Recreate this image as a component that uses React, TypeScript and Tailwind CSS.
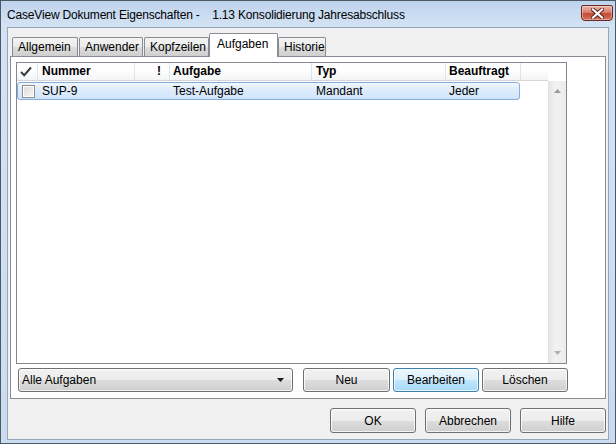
import React from "react";
import clsx from "clsx";

const btnNormal =
  "border-[#707070] bg-[linear-gradient(to_bottom,#f2f2f2_0%,#ebebeb_50%,#dddddd_51%,#cfcfcf_100%)]";
const btnFocus =
  "border-[#3c7fb1] bg-[linear-gradient(to_bottom,#eaf6fd_0%,#d9f0fc_50%,#bee6fd_51%,#a7d9f5_100%)]";

function Button({ label, focused, className }: { label: string; focused?: boolean; className?: string }) {
  return (
    <div
      className={clsx(
        "h-[24px] rounded-[3px] border flex items-center justify-center text-[12px] text-black shadow-[inset_0_0_0_1px_rgba(255,255,255,0.75)]",
        focused ? btnFocus : btnNormal,
        className
      )}
    >
      {label}
    </div>
  );
}

function Tab({ label, selected, className }: { label: string; selected?: boolean; className?: string }) {
  if (selected) {
    return (
      <div
        className={clsx(
          "relative z-10 -mb-px h-[24px] border border-b-0 border-[#898c95] rounded-t-[2px] bg-white pl-[7px] pt-[3px] text-[12px] leading-[15px]",
          className
        )}
      >
        {label}
      </div>
    );
  }
  return (
    <div
      className={clsx(
        "h-[19px] border border-b-0 border-[#898c95] rounded-t-[2px] bg-[linear-gradient(to_bottom,#f3f3f3_0%,#ebebeb_50%,#dddddd_51%,#cfcfcf_100%)] pl-[5px] pt-[2px] text-[12px] leading-[15px]",
        className
      )}
    >
      {label}
    </div>
  );
}

function Triangle({ up, color }: { up?: boolean; color: string }) {
  return (
    <svg width="7" height="4" viewBox="0 0 7 4">
      <path d={up ? "M0 4 L3.5 0 L7 4 Z" : "M0 0 L7 0 L3.5 4 Z"} fill={color} />
    </svg>
  );
}

export default function App() {
  return (
    <div className="w-[616px] h-[444px] bg-[linear-gradient(to_bottom,#bdd3ec_0px,#d4e3f4_26px,#cbdcf0_100%)] border border-[#4f5966] flex flex-col font-['Liberation_Sans',Arial,sans-serif] text-black select-none">
      {/* title bar */}
      <div className="h-[26px] flex items-start">
        <span className="ml-[6px] mt-[7px] text-[12px] leading-[15px] tracking-[-0.18px] whitespace-pre">
          {"CaseView Dokument Eigenschaften -    1.13 Konsolidierung Jahresabschluss"}
        </span>
        <div className="flex-1" />
        <div className="mt-[4px] mr-[2px] w-[32px] h-[16px] rounded-b-[4px] rounded-t-[2px] border border-[#6b2a24] bg-[linear-gradient(to_bottom,#eab3a5_0%,#d98170_45%,#c64a36_55%,#d5735d_100%)] flex items-center justify-center shadow-[inset_0_0_0_1px_rgba(255,255,255,0.35)]">
          <svg width="13" height="11" viewBox="0 0 13 11">
            <path d="M2 1.5 L11 9.5 M11 1.5 L2 9.5" stroke="#5a2018" strokeWidth="4" strokeLinecap="square" />
            <path d="M2 1.5 L11 9.5 M11 1.5 L2 9.5" stroke="#ffffff" strokeWidth="2.2" strokeLinecap="square" />
          </svg>
        </div>
      </div>

      {/* client area */}
      <div className="flex-1 mx-[6px] mb-[3px] border border-[#95a7bc] bg-[#f0f0f0] flex flex-col px-[2px] pt-[5px]">
        {/* tabs */}
        <div className="h-[23px] flex items-end pl-[2px]">
          <Tab label="Allgemein" className="w-[66px]" />
          <Tab label="Anwender" className="w-[64px] ml-[1px]" />
          <Tab label="Kopfzeilen" className="w-[65px] ml-[1px]" />
          <Tab label="Aufgaben" selected className="w-[69px]" />
          <Tab label="Historie" className="w-[48px]" />
        </div>

        {/* tab page */}
        <div className="h-[343px] border border-[#898c95] bg-white flex flex-col pl-[5px] pt-[5px]">
          {/* list view */}
          <div className="w-[551px] h-[302px] border border-[#828790] bg-white flex">
            <div className="w-[531px] flex flex-col">
              <div className="h-[18px] flex border-b border-[#d5d5d5] bg-[linear-gradient(to_bottom,#ffffff_0%,#ffffff_40%,#f3f4f6_100%)] text-[12px] font-bold leading-[17px]">
                <div className="w-[21px] border-r border-[#e3e4e6] flex items-center pl-[3px]">
                  <svg width="12" height="11" viewBox="0 0 12 11">
                    <path d="M1 6 L4.2 9.2 L11 1.5" fill="none" stroke="#3a3a3a" strokeWidth="2" />
                  </svg>
                </div>
                <div className="w-[97px] border-r border-[#e3e4e6] pl-[4px]">Nummer</div>
                <div className="w-[35px] border-r border-[#e3e4e6] flex justify-end pr-[8px]">!</div>
                <div className="w-[142px] border-r border-[#e3e4e6] pl-[3px]">Aufgabe</div>
                <div className="w-[134px] border-r border-[#e3e4e6] pl-[4px]">Typ</div>
                <div className="w-[75px] border-r border-[#e3e4e6] pl-[3px]">Beauftragt</div>
                <div className="flex-1" />
              </div>
              <div className="pt-px">
                <div className="w-[503px] h-[18px] flex items-center rounded-[3px] border border-[#84acdd] bg-[linear-gradient(to_bottom,#f1f7fe_0%,#dcebfc_50%,#cfe4fb_100%)] text-[12px] leading-[16px]">
                  <div className="w-[20px] pl-[4px] flex items-center">
                    <div className="w-[13px] h-[13px] border border-[#8e8f8f] bg-[linear-gradient(135deg,#dcdcdc_0%,#f7f7f7_100%)] shadow-[inset_0_0_0_1px_#ffffff]" />
                  </div>
                  <div className="w-[97px] pl-[4px]">SUP-9</div>
                  <div className="w-[35px]" />
                  <div className="w-[142px] pl-[3px]">Test-Aufgabe</div>
                  <div className="w-[134px] pl-[4px]">Mandant</div>
                  <div className="w-[73px] pl-[3px]">Jeder</div>
                </div>
              </div>
            </div>
            {/* scrollbar */}
            <div className="w-[18px] flex flex-col">
              <div className="h-[18px]" />
              <div className="flex-1 bg-[linear-gradient(to_right,#e6e6e6_0%,#f2f2f2_40%,#ececec_100%)] border-l border-[#e0e0e0] flex flex-col items-center justify-between py-[8px]">
                <Triangle up color="#9a9a9a" />
                <Triangle color="#b0b0b0" />
              </div>
            </div>
          </div>

          {/* bottom controls */}
          <div className="mt-[4px] flex items-center pl-[2px]">
            <div className="w-[275px] h-[24px] rounded-[3px] border border-[#707070] bg-[linear-gradient(to_bottom,#f2f2f2_0%,#ebebeb_50%,#dddddd_51%,#cfcfcf_100%)] shadow-[inset_0_0_0_1px_rgba(255,255,255,0.75)] flex items-center pl-[3px] pr-[8px] text-[12px]">
              <span className="flex-1">Alle Aufgaben</span>
              <Triangle color="#1a1a1a" />
            </div>
            <Button label="Neu" className="w-[87px] ml-[10px] -mt-[1px]" />
            <Button label="Bearbeiten" focused className="w-[86px] ml-[3px] -mt-[1px]" />
            <Button label="Löschen" className="w-[86px] ml-[3px] -mt-[1px]" />
          </div>
        </div>

        {/* dialog buttons */}
        <div className="mt-[9px] flex justify-end gap-[9px]">
          <Button label="OK" className="w-[86px] h-[25px]" />
          <Button label="Abbrechen" className="w-[86px] h-[25px]" />
          <Button label="Hilfe" className="w-[86px] h-[25px]" />
        </div>
      </div>
    </div>
  );
}
